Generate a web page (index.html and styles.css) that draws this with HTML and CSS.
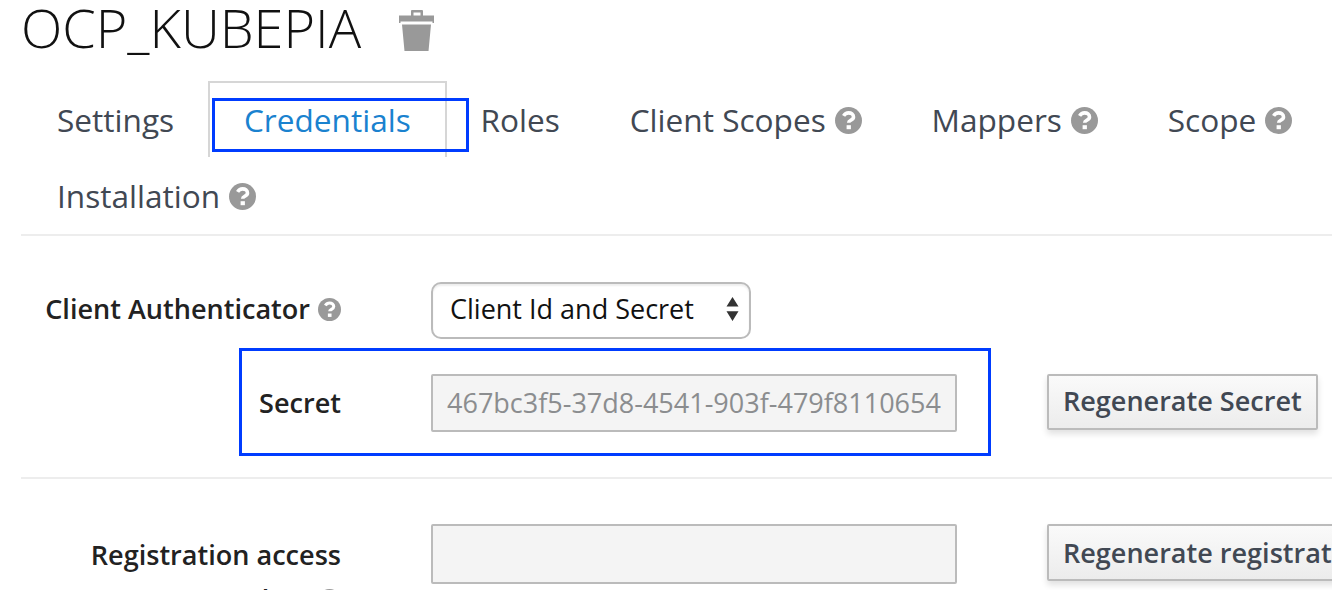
FILE: index.html
```
<!DOCTYPE html>
<html lang="en">
<head>
<meta charset="utf-8">
<title>OCP_KUBEPIA</title>
<link rel="stylesheet" href="styles.css">
</head>
<body>
<svg class="defs" width="0" height="0">
  <symbol id="help" viewBox="0 0 27 27">
    <circle cx="13.5" cy="13.5" r="13.5" fill="#999"/>
    <path d="M8.6 8.9C9.8 6.9 11.5 5.9 13.6 5.9c2.7 0 4.9 1.6 4.9 4 0 3.4-4.800 3.3-4.800 5.800" fill="none" stroke="#fff" stroke-width="3.6"/>
    <rect x="11.6" y="18.2" width="4.3" height="4" fill="#fff"/>
  </symbol>
</svg>
<main class="page">
  <header class="heading">
    <h1 class="title">OCP_KUBEPIA</h1>
    <svg class="trash" viewBox="0 0 36 42" fill="#999">
      <path d="M0 5.5h12V1a1 1 0 0 1 1-1h10a1 1 0 0 1 1 1v4.500h11v7.500h-1.500v-1.500H1.500V13H0zM14.500 2.500v3h7v-3z" fill-rule="evenodd"/>
      <path d="M3 14.500h29L29.500 41h-24z"/>
    </svg>
  </header>
  <nav class="tabs">
    <a class="tab">Settings</a>
    <a class="tab active">Credentials</a>
    <a class="tab">Roles</a>
    <a class="tab">Client Scopes<svg class="help"><use href="#help"/></svg></a>
    <a class="tab">Mappers<svg class="help"><use href="#help"/></svg></a>
    <a class="tab">Scope<svg class="help"><use href="#help"/></svg></a>
    <a class="tab">Installation<svg class="help"><use href="#help"/></svg></a>
  </nav>
  <section class="form credentials">
    <label class="label">Client Authenticator<svg class="help small"><use href="#help"/></svg></label>
    <div class="select"><span>Client Id and Secret</span>
      <svg class="arrows" viewBox="0 0 13 24" fill="#333"><path d="M6.500 0L12.500 9.500H.5zM.5 14.300h12L6.500 24z"/></svg>
    </div>
    <label class="label secret">Secret</label>
    <div class="input secret"><span class="value">467bc3f5-37d8-4541-903f-479f8110654</span></div>
    <button class="button">Regenerate Secret</button>
  </section>
  <section class="form registration">
    <label class="label multi">Registration access<br>token<svg class="help small"><use href="#help"/></svg></label>
    <div class="input tall"></div>
    <button class="button wide">Regenerate registration access token</button>
  </section>
  <div class="mark mark-tab"></div>
  <div class="mark mark-secret"></div>
</main>
</body>
</html>
```
FILE: styles.css
```
* { box-sizing: border-box; }
body { margin: 0; background: #fff; font-family: "Open Sans", sans-serif; color: #222; }
.defs { position: absolute; }
.page { position: relative; width: 1332px; height: 590px; overflow: hidden; padding-left: 21px; }
.heading { display: flex; height: 81px; }
.title { margin: 0; font-weight: 300; font-size: 54px; line-height: 54px; color: #111; width: 378px; white-space: nowrap; }
.trash { width: 36px; height: 42px; margin-top: 10px; }
.tabs { display: flex; flex-wrap: wrap; height: 155px; align-content: flex-start; border-bottom: 2px solid #ededed; }
.tab { display: flex; align-items: center; height: 76px; padding: 0 34px 1px; margin-right: -2.2px; border: 2px solid transparent; border-bottom: 0; font-size: 31.6px; line-height: 44px; color: #414853; white-space: nowrap; }
.tab.active { color: #1a82cf; border-color: #d6d6d6; }
.help { width: 27px; height: 27px; margin: 1px 0 0 9px; flex: none; }
.help.small { width: 23px; height: 23px; margin: 0 0 0 8px; }
.form { display: grid; grid-template-columns: 320px 526px 1fr; column-gap: 90px; }
.credentials { height: 243px; padding-top: 46px; grid-template-rows: 57px 58px; row-gap: 35px; border-bottom: 2px solid #ededed; align-content: start; }
.registration { padding-top: 45px; }
.label { display: flex; justify-content: flex-end; align-items: center; font-weight: 600; font-size: 27.07px; line-height: 38px; white-space: nowrap; height: 54px; }
.select { grid-column: 2 / 4; display: flex; align-items: center; justify-content: space-between; width: 320px; height: 57px; border: 2px solid #bbb; border-radius: 10px; padding: 0 10px 4px 17px; font-size: 27px; box-shadow: inset 0 2px 2px #eee; color: #111; white-space: nowrap; }
.arrows { width: 13px; height: 24px; }
.input { height: 58px; border: 2px solid #bbb; border-radius: 2px; background: #f4f4f4; color: #8b8d8f; font-size: 27px; padding: 0 14px; line-height: 54px; }
.value { display: block; overflow: hidden; white-space: nowrap; }
.label.secret { height: 58px; }
.button { justify-self: start; height: 56px; padding: 0 14px 3px; font: 600 27.05px "Open Sans", sans-serif; color: #414853; border: 2px solid #bbb; border-radius: 2px; background: linear-gradient(#fafafa, #ececec); box-shadow: 0 4px 6px rgba(0,0,0,.12); white-space: nowrap; text-align: left; }
.button.wide { height: 57px; padding-bottom: 1px; }
.input.tall { height: 60px; }
.label.multi { display: block; text-align: right; line-height: 45px; padding-top: 8px; height: 100px; }
.multi .help { vertical-align: -2px; }
.mark { position: absolute; border: 3px solid #003cff; }
.mark-tab { left: 212px; top: 98px; width: 257px; height: 54px; }
.mark-secret { left: 239px; top: 348px; width: 752px; height: 108px; }
```
